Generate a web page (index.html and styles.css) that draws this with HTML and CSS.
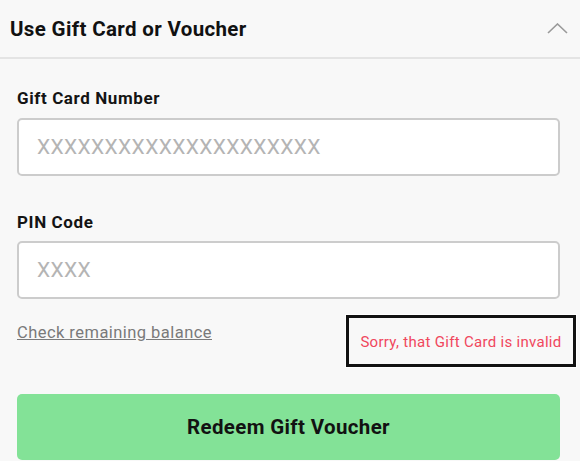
FILE: index.html
```html
<!DOCTYPE html>
<html lang="en">
<head>
    <meta charset="UTF-8">
    <meta name="viewport" content="width=device-width, initial-scale=1.0">
    <title>Use Gift Card or Voucher</title>
    <link rel="stylesheet" href="styles.css">
</head>
<body>
    <div class="voucher">
        <div class="voucher-header">
            <span class="voucher-title">Use Gift Card or Voucher</span>
            <svg class="chevron" width="21" height="11" viewBox="0 0 21 11">
                <polyline points="1,10 10.5,1 20,10" fill="none" stroke="#9a9a9a" stroke-width="1.6"/>
            </svg>
        </div>
        <div class="voucher-body">
            <label class="field-label" for="card">Gift Card Number</label>
            <input class="field-input" id="card" type="text" placeholder="XXXXXXXXXXXXXXXXXXXXX">

            <label class="field-label pin" for="pin">PIN Code</label>
            <input class="field-input" id="pin" type="text" placeholder="XXXX">

            <div class="voucher-row">
                <a class="balance-link" href="#">Check remaining balance</a>
                <div class="error-box">Sorry, that Gift Card is invalid</div>
            </div>

            <button class="redeem-button">Redeem Gift Voucher</button>
        </div>
    </div>
</body>
</html>
```

FILE: styles.css
```css
body {
    font-family: Roboto, 'Liberation Sans', sans-serif;
    margin: 0;
    padding: 0;
    background-color: #f8f8f8;
    color: #1a1a1a;
}

.voucher {
    width: 580px;
}

.voucher-header {
    height: 57px;
    display: flex;
    justify-content: space-between;
    align-items: center;
    padding: 0 12px 0 10px;
    border-bottom: 2px solid #e4e4e4;
}

.voucher-title {
    font-size: 20.5px;
    font-weight: 700;
    letter-spacing: 0.35px;
    color: #111111;
    margin-top: 1px;
}

.voucher-body {
    display: flex;
    flex-direction: column;
    padding: 29px 20px 0 17px;
}

.field-label {
    font-size: 17px;
    line-height: 20px;
    font-weight: 700;
    letter-spacing: 0.6px;
    color: #141414;
    margin-bottom: 10px;
}

.field-label.pin {
    margin-top: 36px;
    margin-bottom: 9px;
}

.field-input {
    height: 58px;
    box-sizing: border-box;
    border: 2px solid #cccccc;
    border-radius: 5px;
    background-color: #ffffff;
    padding: 0 18px;
    font-family: Roboto, 'Liberation Sans', sans-serif;
    font-size: 21px;
    letter-spacing: 0.35px;
    color: #333333;
    outline: none;
}

.field-input::placeholder {
    color: #b4b4b4;
}

.voucher-row {
    display: flex;
    justify-content: space-between;
    align-items: flex-start;
    margin-top: 16px;
}

.balance-link {
    margin-top: 8px;
    font-size: 16.5px;
    line-height: 20px;
    letter-spacing: 0.45px;
    color: #7a7a7a;
    text-decoration: underline;
}

.error-box {
    width: 230px;
    height: 52px;
    box-sizing: border-box;
    margin-right: -16px;
    border: 3px solid #111111;
    box-shadow: 0 0 0 1px #ffffff;
    display: flex;
    align-items: center;
    justify-content: center;
    padding-top: 2px;
    font-size: 15px;
    letter-spacing: 0.3px;
    color: #f0475d;
}

.redeem-button {
    margin-top: 27px;
    height: 66px;
    border: none;
    border-radius: 5px;
    background-color: #83e297;
    font-family: Roboto, 'Liberation Sans', sans-serif;
    font-size: 20.5px;
    font-weight: 700;
    letter-spacing: 0.35px;
    color: #121212;
    cursor: pointer;
}
```
